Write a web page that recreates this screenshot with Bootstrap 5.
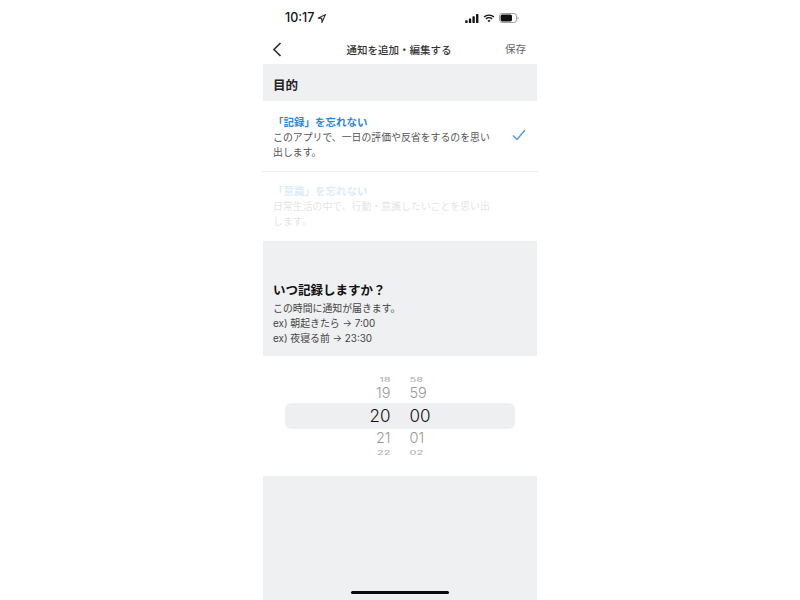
<!DOCTYPE html>
<html lang="ja">
<head>
<meta charset="utf-8">
<title>通知を追加・編集する</title>
<link rel="stylesheet" href="https://cdn.jsdelivr.net/npm/bootstrap@5.3.0/dist/css/bootstrap.min.css">
<style>
html,body{height:600px;overflow:hidden;background:#fff;}
body{font-family:"Liberation Sans","Noto Sans CJK JP",sans-serif;color:#222;}
.phone{width:276px;height:600px;margin:0 auto;position:relative;overflow:hidden;}
.status-row{height:38px;padding:0 19px 2px 23px;}
.clock{font-size:12.5px;font-weight:500;color:#111;line-height:1;font-family:Inter,"Liberation Sans",sans-serif;}
.loc-icon{margin-left:-1px;}
.wifi-icon{margin-left:4px;}
.batt-icon{margin-left:4px;}
.nav-row{height:26px;padding:0 12px 3px 10px;}
.nav-title{font-size:10.5px;font-weight:500;color:#333;line-height:1;padding-top:1px;}
.nav-save{font-size:10.5px;color:#666;line-height:1;}
.nav-side{width:40px;}
.gray-band{background:#eff0f2;margin:0 1px;}
.purpose-band{height:37px;padding:7px 10px 0;font-size:12.5px;font-weight:700;color:#222;}
.opt-item{padding:13px 11px 0;height:71px;border-bottom:1px solid #eeeff1;}
.opt-second{border-bottom:0;height:69px;padding-top:11px;}
.opt-body{width:222px;}
.opt-title{font-size:10.5px;font-weight:700;line-height:16px;color:#2f86d8;}
.opt-text{font-size:9.9px;line-height:15px;color:#555;}
.opt-faded{opacity:.16;}
.opt-check{margin:15px 1px 0 0;}
.when-band{height:115px;padding:41px 10px 0;}
.when-title{font-size:12.5px;font-weight:700;color:#111;line-height:18px;margin-bottom:1px;}
.when-text{font-size:9.9px;line-height:15px;color:#444;font-family:Inter,"Noto Sans CJK JP",sans-serif;}
.picker{height:120px;padding-top:19px;}
.wheel-row{display:flex;justify-content:center;gap:19px;font-family:Inter,"Liberation Sans",sans-serif;color:#999;line-height:1;}
.wheel-row span{width:22px;display:block;}
.wheel-row span:first-child{text-align:right;}
.wheel-row span:last-child{text-align:left;}
.r-far{font-size:11px;height:10px;transform:scaleY(.5);color:#aaa;}
.r-near{font-size:14.5px;height:18px;font-weight:300;padding-top:1px;}
.r-sel{font-size:17px;height:26px;margin:0 23px;background:#eeeff1;border-radius:6px;color:#111;align-items:center;font-weight:300;}
.r-near2{height:19px;padding-top:2px;}
.bottom-band{height:124px;}
.home-bar{position:absolute;left:89px;bottom:6px;width:98px;height:3.5px;background:#0a0a0a;border-radius:2px;}
</style>
</head>
<body>
<div class="phone">
  <div class="status-row d-flex justify-content-between align-items-center">
    <div class="d-flex align-items-center gap-1">
      <span class="clock">10:17</span>
      <svg class="loc-icon" width="9" height="9" viewBox="0 0 10 10"><path d="M9.3.7 1 4.7h4.2l.4 4.4z" fill="none" stroke="#222" stroke-width="1.2"/></svg>
    </div>
    <div class="d-flex align-items-center">
      <svg width="14" height="9" viewBox="0 0 15 10"><rect x="0" y="7" width="2.6" height="3" rx=".6" fill="#111"/><rect x="4" y="5" width="2.6" height="5" rx=".6" fill="#111"/><rect x="8" y="2.6" width="2.6" height="7.4" rx=".6" fill="#111"/><rect x="12" y="0" width="2.6" height="10" rx=".6" fill="#111"/></svg>
      <svg class="wifi-icon" width="12" height="9" viewBox="0 0 13 10"><path d="M1 3.4a8 8 0 0 1 11 0M3 5.6a5 5 0 0 1 7 0" fill="none" stroke="#111" stroke-width="1.5"/><path d="m4.9 7.4 1.6 1.9 1.6-1.9a2.4 2.4 0 0 0-3.2 0z" fill="#111"/></svg>
      <svg class="batt-icon" width="20" height="10" viewBox="0 0 20 10"><rect x=".5" y=".5" width="17" height="9" rx="2.6" fill="none" stroke="#888" stroke-width=".8"/><rect x="1.6" y="1.6" width="11.4" height="6.8" rx="1.6" fill="#111"/><path d="M18.6 3.4c.8.2 1 .9 1 1.6s-.2 1.4-1 1.6z" fill="#999"/></svg>
    </div>
  </div>
  <div class="nav-row d-flex justify-content-between align-items-center">
    <div class="nav-side">
      <svg class="d-block" width="10" height="15" viewBox="0 0 10 15"><path d="M8.5 1 2 7.5 8.5 14" fill="none" stroke="#333" stroke-width="1.7"/></svg>
    </div>
    <div class="nav-title">通知を追加・編集する</div>
    <div class="nav-side nav-save text-end">保存</div>
  </div>
  <div class="gray-band purpose-band d-flex align-items-center">目的</div>
  <div class="opt-item d-flex justify-content-between">
    <div class="opt-body">
      <div class="opt-title">「記録」を忘れない</div>
      <div class="opt-text">このアプリで、一日の評価や反省をするのを思い出します。</div>
    </div>
    <svg class="opt-check" width="14" height="12" viewBox="0 0 14 12"><path d="m1 6.5 4 4L13 1" fill="none" stroke="#4a92dc" stroke-width="1.2"/></svg>
  </div>
  <div class="opt-item opt-second opt-faded">
    <div class="opt-body">
      <div class="opt-title">「意識」を忘れない</div>
      <div class="opt-text">日常生活の中で、行動・意識したいことを思い出します。</div>
    </div>
  </div>
  <div class="gray-band when-band">
    <div class="when-title">いつ記録しますか？</div>
    <div class="when-text">この時間に通知が届きます。</div>
    <div class="when-text">ex) 朝起きたら → 7:00</div>
    <div class="when-text">ex) 夜寝る前 → 23:30</div>
  </div>
  <div class="picker">
    <div class="wheel-row r-far"><span>18</span><span>58</span></div>
    <div class="wheel-row r-near"><span>19</span><span>59</span></div>
    <div class="wheel-row r-sel"><span>20</span><span>00</span></div>
    <div class="wheel-row r-near r-near2"><span>21</span><span>01</span></div>
    <div class="wheel-row r-far"><span>22</span><span>02</span></div>
  </div>
  <div class="gray-band bottom-band"></div>
  <div class="home-bar"></div>
</div>
<script src="https://cdn.jsdelivr.net/npm/bootstrap@5.3.0/dist/js/bootstrap.bundle.min.js"></script>
</body>
</html>
